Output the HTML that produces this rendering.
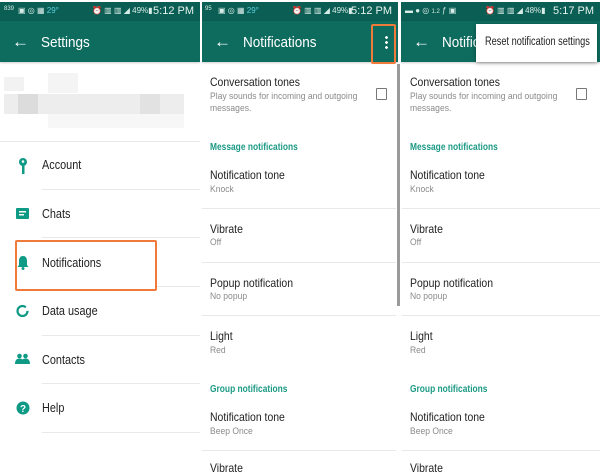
<!DOCTYPE html>
<html><head><meta charset="utf-8"><style>
*{margin:0;padding:0;box-sizing:border-box}
body{width:600px;height:474px;overflow:hidden;background:#fff;font-family:"Liberation Sans",sans-serif;position:relative;color:#222}
.p{position:absolute;top:0;height:474px;overflow:hidden;background:#fff}
.sb{position:absolute;left:0;right:0;top:2px;height:19px;background:#0b5e53;color:#d8ece8;font-size:8px}
.tb{position:absolute;left:0;right:0;top:21px;height:41px;background:#0e6c5f;color:#fff;box-shadow:0 1px 2px rgba(0,0,0,.2)}
.tb .ar{position:absolute;left:12px;top:11px;font-size:17px}
.tb .t{position:absolute;left:41px;top:13px;font-size:15px;transform:scaleX(.9);transform-origin:left}
.abs{position:absolute;white-space:nowrap}
.ti{font-size:12px;color:#222;transform:scaleX(.87);transform-origin:left}
.su{font-size:9.5px;color:#8a8a8a;transform:scaleX(.9);transform-origin:left;line-height:12px}
.hd{font-size:10.5px;color:#1d9a85;font-weight:bold;transform:scaleX(.8);transform-origin:left}
.ln{position:absolute;height:1px;background:#e8e8e8}
.time{position:absolute;right:6px;top:3px;font-size:11px;color:#e6f3f0}
</style></head><body>

<!-- LEFT -->
<div class="p" style="left:0;width:200px">
<div class="sb"><span class="abs" style="left:4px;top:4px;font-size:6px">839</span><span class="abs" style="left:18px;top:4px">▣ ◎ ▦ <span style="color:#5cd0e0">29°</span></span><span class="abs" style="left:92px;top:4px">⏰ ▥ ▥ ◢ 49%▮</span><span class="time">5:12 PM</span></div>
<div class="tb"><span class="ar">←</span><span class="t">Settings</span></div>
<div class="abs" style="left:4px;top:77px;width:20px;height:14px;background:#f2f2f2"></div>
<div class="abs" style="left:48px;top:73px;width:30px;height:20px;background:#f4f4f4"></div>
<div class="abs" style="left:4px;top:94px;width:180px;height:20px;background:#ededed"></div>
<div class="abs" style="left:18px;top:94px;width:20px;height:20px;background:#dcdcdc"></div>
<div class="abs" style="left:140px;top:94px;width:20px;height:20px;background:#e2e2e2"></div>
<div class="abs" style="left:48px;top:114px;width:136px;height:14px;background:#f7f7f7"></div>
<div class="ln" style="left:0;width:200px;top:141px"></div>
<svg class="abs" style="left:17px;top:157px" width="12" height="18" viewBox="0 0 12 18"><circle cx="6" cy="5" r="4" fill="#0f9a86"/><circle cx="6" cy="4.5" r="1.3" fill="#fff"/><rect x="5" y="8" width="2.5" height="9" fill="#0f9a86"/></svg>
<div class="abs ti" style="left:42px;top:158px;font-size:12.5px">Account</div>
<div class="ln" style="left:42px;width:158px;top:189px"></div>
<svg class="abs" style="left:16px;top:208px" width="13" height="11"><rect width="13" height="11" rx="1" fill="#0f9a86"/><rect x="3" y="3" width="7" height="1.5" fill="#fff"/><rect x="3" y="6" width="5" height="1.5" fill="#fff"/></svg>
<div class="abs ti" style="left:42px;top:207px;font-size:12.5px">Chats</div>
<div class="ln" style="left:42px;width:158px;top:237px"></div>
<svg class="abs" style="left:17px;top:255px" width="12" height="15" viewBox="0 0 12 15"><path d="M6 1C3 1 2 3.5 2 6v4L0.5 12h11L10 10V6C10 3.5 9 1 6 1z" fill="#0f9a86"/><circle cx="6" cy="13.5" r="1.5" fill="#0f9a86"/></svg>
<div class="abs ti" style="left:42px;top:256px;font-size:12.5px">Notifications</div>
<div class="abs" style="left:15px;top:240px;width:142px;height:51px;border:2px solid #f07a3a;border-radius:2px"></div>
<div class="ln" style="left:157px;width:43px;top:286px"></div>
<svg class="abs" style="left:16px;top:304px" width="13" height="14"><circle cx="6.5" cy="7" r="5" fill="none" stroke="#0f9a86" stroke-width="2.2" stroke-dasharray="27 4"/></svg>
<div class="abs ti" style="left:42px;top:304px;font-size:12.5px">Data usage</div>
<div class="ln" style="left:42px;width:158px;top:335px"></div>
<svg class="abs" style="left:15px;top:353px" width="15" height="11"><circle cx="4.5" cy="3" r="2.3" fill="#0f9a86"/><circle cx="10.5" cy="3" r="2.3" fill="#0f9a86"/><path d="M0 11c0-4 2-5.5 4.5-5.5S9 7 9 11zM6 11c0-4 2-5.5 4.5-5.5S15 7 15 11z" fill="#0f9a86"/></svg>
<div class="abs ti" style="left:42px;top:353px;font-size:12.5px">Contacts</div>
<div class="ln" style="left:42px;width:158px;top:383px"></div>
<svg class="abs" style="left:16px;top:401px" width="14" height="14"><circle cx="7" cy="7" r="6.5" fill="#0f9a86"/><text x="7" y="11" font-size="10" font-weight="bold" text-anchor="middle" fill="#fff" font-family="Liberation Sans">?</text></svg>
<div class="abs ti" style="left:42px;top:401px;font-size:12.5px">Help</div>
<div class="ln" style="left:42px;width:158px;top:432px"></div>
</div>

<!-- MIDDLE -->
<div class="p" style="left:202px;width:196px">
<div class="sb"><span class="abs" style="left:3px;top:4px;font-size:6px">95</span><span class="abs" style="left:16px;top:4px">▣ ◎ ▦ <span style="color:#5cd0e0">29°</span></span><span class="abs" style="left:90px;top:4px">⏰ ▥ ▥ ◢ 49%▮</span><span class="time">5:12 PM</span></div>
<div class="tb"><span class="ar">←</span><span class="t">Notifications</span><span class="abs" style="left:183px;top:14px;width:3px;height:14px;background:radial-gradient(circle,#fff 1.3px,transparent 1.5px) 0 0/3px 5px"></span></div>
<div class="abs" style="left:169px;top:24px;width:25px;height:40px;border:2px solid #f07a3a;border-radius:2px"></div>
</div>
<div class="abs" style="left:397px;top:64px;width:3px;height:242px;background:#9a9a9a"></div>

<!-- RIGHT -->
<div class="p" style="left:401px;width:199px">
<div class="sb"><span class="abs" style="left:4px;top:4px">▬ ● ◎ <span style="font-size:6px">1.2</span> ƒ ▣</span><span class="abs" style="left:84px;top:4px">⏰ ▥ ▥ ◢ 48%▮</span><span class="time">5:17 PM</span></div>
<div class="tb"><span class="ar">←</span><span class="t">Notifications</span></div>
<div class="abs" style="left:75px;top:24px;width:121px;height:38px;background:#fff;box-shadow:0 1px 4px rgba(0,0,0,.35)"></div>
<div class="abs ti" style="left:84px;top:36px;font-size:11.5px;transform:scaleX(.8)">Reset notification settings</div>
</div>

<div id="lists"></div>
<script>
var items=[["ti",75,"Conversation tones"],["su",91,"Play sounds for incoming and outgoing"],["su",103,"messages."],["hd",141,"Message notifications"],["ti",168,"Notification tone"],["su",184,"Knock"],["ti",222,"Vibrate"],["su",237,"Off"],["ti",276,"Popup notification"],["su",291,"No popup"],["ti",329,"Light"],["su",345,"Red"],["hd",383,"Group notifications"],["ti",410,"Notification tone"],["su",426,"Beep Once"],["ti",461,"Vibrate"]];
var h="";
[210,410].forEach(function(x){
items.forEach(function(i){h+='<div class="abs '+i[0]+'" style="left:'+x+'px;top:'+i[1]+'px">'+i[2]+'</div>';});
[208,262,315,450].forEach(function(y){h+='<div class="ln" style="left:'+(x-8)+'px;width:'+(x==210?194:198)+'px;top:'+y+'px"></div>';});
h+='<div class="abs" style="left:'+(x+166)+'px;top:88px;width:11px;height:12px;border:1.5px solid #777;border-radius:1px"></div>';
});
document.getElementById("lists").innerHTML=h;
</script>
</body></html>
